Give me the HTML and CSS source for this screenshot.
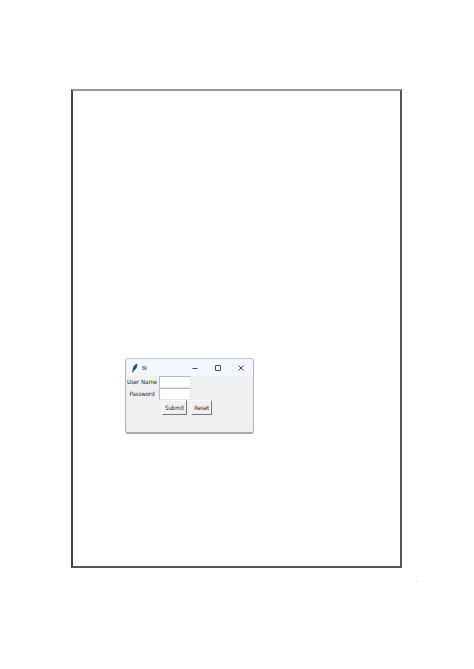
FILE: index.html
```
<!DOCTYPE html>
<html lang="en">
<head>
    <meta charset="utf-8">
    <title>tk</title>
    <meta name="viewport" content="width=device-width, initial-scale=1.0">
    <link rel="stylesheet" href="styles.css">
</head>
<body>

<main class="sheet">
    <section class="window">
        <header class="titlebar">
            <svg class="feather" viewBox="0 0 8 10">
                <path d="M1.6 9.4 C1.2 6 2.4 2 6 .6 C6.8 3 5.6 6.6 2.6 7.6 Z" fill="#2c5878"/>
                <path d="M1.6 9.6 L4.8 3" fill="none" stroke="#17344d" stroke-width=".7"/>
            </svg>
            <h1 class="title">tk</h1>
            <button class="control" type="button" aria-label="Minimize">
                <svg viewBox="0 0 8 8"><path d="M1.5 4.5 H6.5"/></svg>
            </button>
            <button class="control" type="button" aria-label="Maximize">
                <svg viewBox="0 0 8 8"><rect x="1.5" y="1.5" width="5" height="5" rx=".5"/></svg>
            </button>
            <button class="control" type="button" aria-label="Close">
                <svg viewBox="0 0 8 8"><path d="M1.5 1.5 L6.5 6.5 M6.5 1.5 L1.5 6.5"/></svg>
            </button>
        </header>
        <form class="login">
            <label for="user">User Name</label>
            <input id="user" type="text">
            <label for="pass">Password</label>
            <input id="pass" type="password">
            <div class="buttons">
                <button type="button">Submit</button>
                <button type="reset">Reset</button>
            </div>
        </form>
    </section>
</main>

<footer class="mark">.</footer>

</body>
</html>
```
FILE: styles.css
```
* { box-sizing: border-box; }

body {
    margin: 0;
    padding: 89px 72px 0 71px;
    background: #fff;
    color: #222;
    font-family: "DejaVu Sans Condensed", "Liberation Sans", sans-serif;
    font-size: 6px;
    line-height: 8px;
}

.sheet {
    min-height: 479px;
    padding: 267px 52px 132px;
    border: 2px solid #555;
    border-top-color: #999;
    border-left-color: #444;
}

.window {
    width: 129px;
    min-height: 76px;
    background: #f0f0f0;
    border: 1px solid #b4b4b4;
    border-top-color: #c8c8c8;
    border-bottom: 2px solid #aaa;
    border-radius: 3px;
    overflow: hidden;
}

.titlebar {
    display: flex;
    align-items: center;
    height: 17px;
    padding: 0 1px 0 5px;
    background: #f2f6fd;
}

.feather {
    width: 8px;
    height: 10px;
}

.title {
    flex: 1;
    margin: 0 0 0 3px;
    font-size: 6px;
    font-weight: normal;
}

.control {
    display: flex;
    align-items: center;
    justify-content: center;
    width: 23px;
    height: 17px;
    padding: 0;
    border: 0;
    background: none;
}

.control svg {
    width: 8px;
    height: 8px;
    fill: none;
    stroke: #445;
    stroke-width: 1;
}

.login {
    display: grid;
    grid-template-columns: 32px 32px;
    column-gap: 1px;
    align-items: center;
    text-align: center;
}

.login label { white-space: nowrap; }

.login input {
    width: 100%;
    height: 12px;
    padding: 0 1px;
    border: 1px solid #e4e4e4;
    border-top-color: #bbb;
    border-left-color: #bbb;
    background: #fff;
    font: inherit;
}

.buttons {
    display: flex;
    grid-column: 2;
    gap: 4px;
    padding-left: 3px;
}

.buttons button {
    height: 15px;
    padding: 0 2px;
    border: 1px solid #fafafa;
    border-right-color: #777;
    border-bottom-color: #777;
    background: #f0f0f0;
    color: #222;
    font: inherit;
}

.mark {
    padding: 8px 0 0;
    margin-right: -16px;
    color: #999;
    text-align: right;
}
```
